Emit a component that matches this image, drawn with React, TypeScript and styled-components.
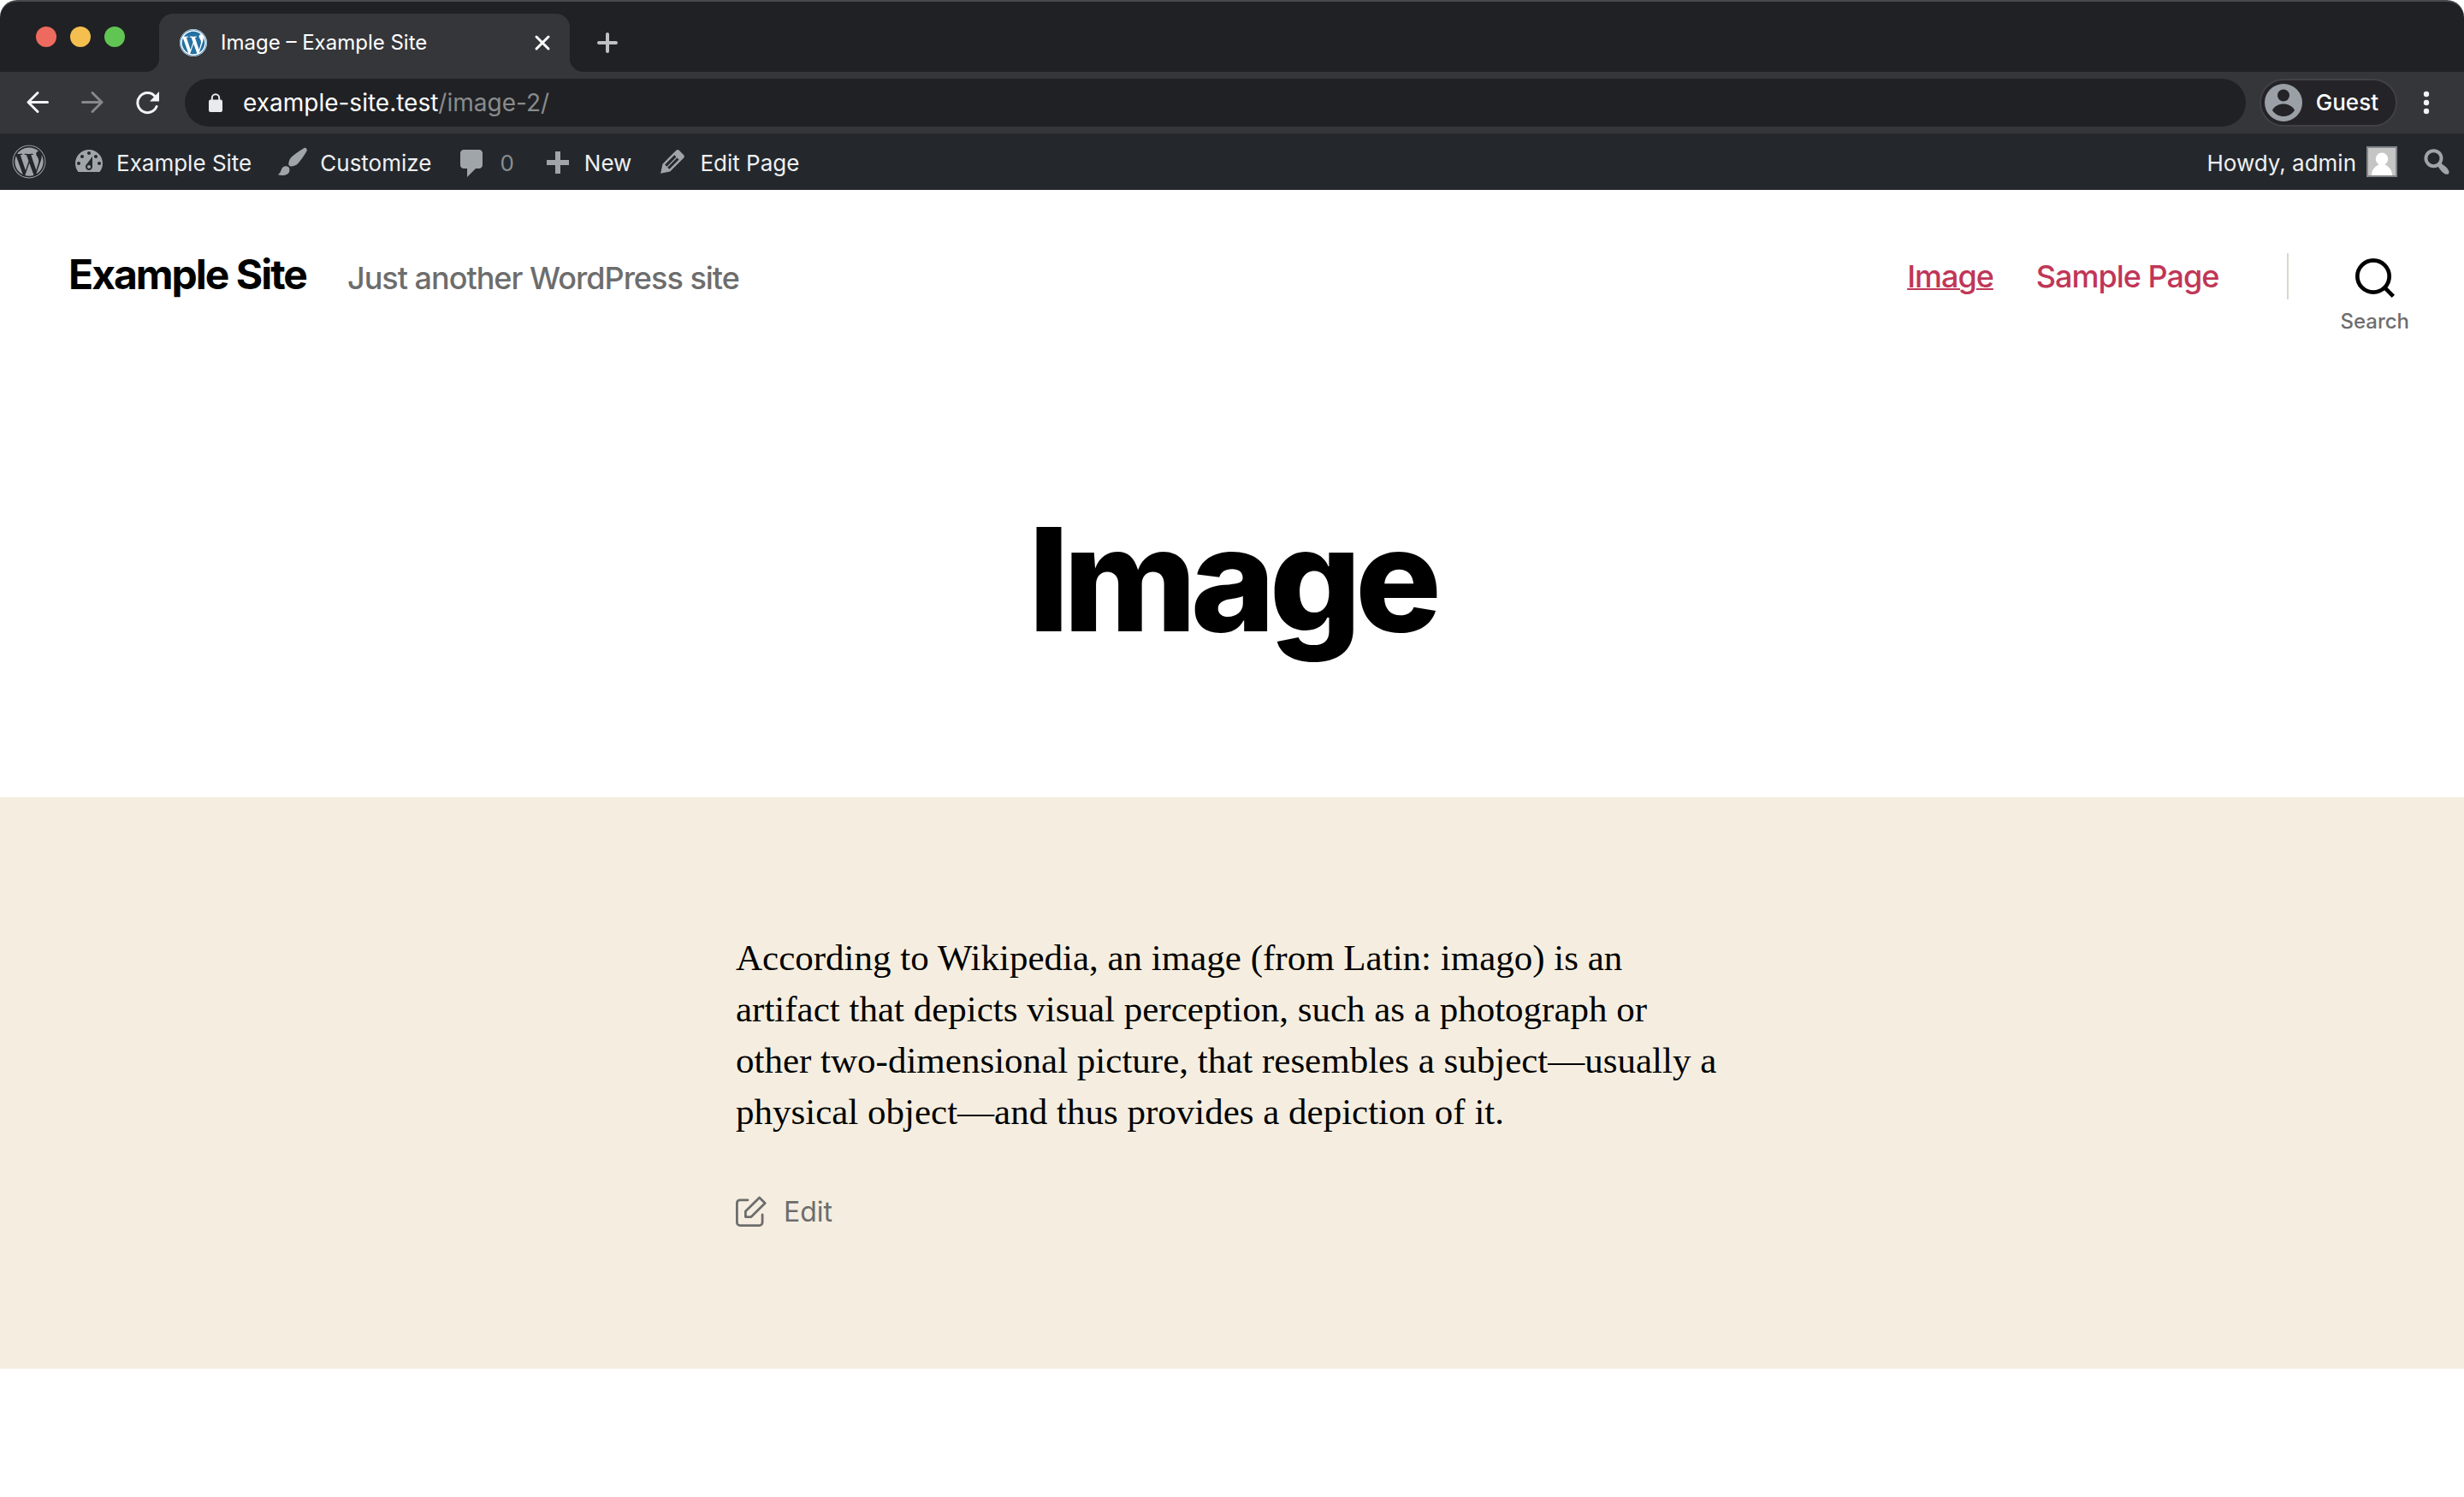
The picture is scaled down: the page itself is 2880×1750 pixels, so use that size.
import React from "react";
import styled, { createGlobalStyle } from "styled-components";
import { FaWordpress } from "react-icons/fa";

const GlobalStyle = createGlobalStyle`
  * { box-sizing: border-box; }
  body {
    margin: 0;
    background: #fff;
    font-family: Inter, "Liberation Sans", sans-serif;
    -webkit-font-smoothing: antialiased;
  }
  button {
    padding: 0;
    border: 0;
    background: none;
    color: inherit;
    font: inherit;
    cursor: pointer;
  }
  a { color: inherit; text-decoration: none; }
  svg { display: block; flex: none; }
`;

const Page = styled.div`
  min-height: 100vh;
  display: flex;
  flex-direction: column;
`;

/* ---------- browser window ---------- */

const TabStrip = styled.div`
  display: flex;
  height: 84px;
  padding: 14px 0 0 42px;
  border-top: 2px solid #48494c;
  border-radius: 20px 20px 0 0;
  background: #202124;
`;

const TrafficLights = styled.div`
  display: flex;
  gap: 16px;
  margin: 15px 40px 0 0;
`;

const Light = styled.button<{ $color: string }>`
  width: 24px;
  height: 24px;
  border-radius: 50%;
  background: ${(p) => p.$color};
`;

const Tab = styled.div`
  position: relative;
  display: flex;
  align-items: center;
  width: 480px;
  height: 68px;
  padding: 0 22px 0 24px;
  border-radius: 16px 16px 0 0;
  background: #35363a;
  color: #fff;

  &::before,
  &::after {
    content: "";
    position: absolute;
    bottom: 0;
    width: 16px;
    height: 16px;
  }
  &::before {
    right: 100%;
    background: radial-gradient(circle at 0 0, transparent 16px, #35363a 16px);
  }
  &::after {
    left: 100%;
    background: radial-gradient(circle at 100% 0, transparent 16px, #35363a 16px);
  }
`;

const Favicon = styled.span`
  display: block;
  margin-right: 16px;
  border-radius: 50%;
  background: #fff;
  color: #2471a3;
`;

const TabTitle = styled.span`
  flex: 1;
  font-size: 24px;
  line-height: 32px;
`;

const NewTab = styled.button`
  align-self: flex-start;
  margin: 22px 0 0 32px;
`;

const Toolbar = styled.div`
  display: flex;
  align-items: center;
  height: 72px;
  padding: 0 40px 0 30px;
  background: #35363a;
  color: #f1f3f4;
`;

const NavButtons = styled.div`
  display: flex;
  gap: 36px;
  margin-right: 30px;
`;

const Omnibox = styled.label`
  flex: 1;
  display: flex;
  align-items: center;
  height: 56px;
  padding: 0 28px;
  border-radius: 28px;
  background: #202124;
  color: #8a8b8d;
  font-size: 28px;
  line-height: 36px;
`;

const HostInput = styled.input`
  field-sizing: content;
  margin-left: 24px;
  padding: 0;
  border: 0;
  outline: 0;
  background: none;
  color: #fff;
  font: inherit;
`;

const Profile = styled.button`
  display: flex;
  align-items: center;
  gap: 16px;
  height: 56px;
  margin: 0 30px 0 16px;
  padding: 0 20px 0 4px;
  border: 2px solid #414146;
  border-radius: 28px;
  background: #242328;
  color: #fff;
  font-size: 26px;
  line-height: 32px;
  font-weight: 500;
`;

/* ---------- admin bar ---------- */

const AdminBar = styled.nav`
  display: flex;
  align-items: center;
  justify-content: space-between;
  height: 66px;
  padding: 0 12px 0 14px;
  background: #24282d;
  color: #f0f0f1;
  font-size: 26px;
  line-height: 32px;
`;

const AdminGroup = styled.div`
  display: flex;
  align-items: center;
`;

const AdminLink = styled.a<{ $before: number; $dim?: boolean }>`
  display: flex;
  align-items: center;
  gap: 12px;
  margin-left: ${(p) => p.$before}px;
  color: ${(p) => (p.$dim ? "#8a8d90" : "inherit")};

  svg { color: #a0a5aa; }
`;

const AdminLabel = styled.span`
  padding-top: 4px;
`;

/* ---------- site ---------- */

const SiteHeader = styled.header`
  display: flex;
  justify-content: space-between;
  align-items: flex-start;
  padding: 68px 64px 61px 80px;
`;

const Branding = styled.div`
  display: flex;
  align-items: baseline;
  gap: 48px;
  line-height: 62px;
`;

const SiteTitle = styled.a`
  color: #000;
  font-size: 48px;
  font-weight: 700;
  letter-spacing: -2px;
`;

const Tagline = styled.span`
  color: #6d6d6d;
  font-size: 36px;
  font-weight: 450;
  letter-spacing: -1px;
`;

const HeaderNav = styled.div`
  display: flex;
  align-items: flex-start;
`;

const Menu = styled.nav`
  display: flex;
  gap: 50px;
  margin-top: 6px;
  padding-right: 80px;
  border-right: 2px solid #dcd7ca;
  color: #c03657;
  font-size: 36px;
  line-height: 54px;
  font-weight: 450;
  letter-spacing: -1px;
`;

const MenuLink = styled.a<{ $current?: boolean }>`
  text-decoration: ${(p) => (p.$current ? "underline" : "none")};
  text-decoration-thickness: 2px;
`;

const SearchButton = styled.button`
  display: flex;
  flex-direction: column;
  align-items: center;
  gap: 16px;
  margin-left: 60px;
  padding-top: 12px;
  color: #6d6d6d;
  font-size: 24px;
  line-height: 24px;
  font-weight: 500;

  svg { color: #000; }
`;

const EntryHeader = styled.header`
  padding: 136px 80px 163px;
  text-align: center;
`;

const EntryTitle = styled.h1`
  margin: 0;
  font-size: 168px;
  line-height: 184px;
  font-weight: 800;
  letter-spacing: -7px;
`;

const EntryBody = styled.section`
  padding: 158px 80px 166px;
  background: #f5eee0;
`;

const Column = styled.div`
  max-width: 1160px;
  margin: 0 auto;
`;

const Paragraph = styled.p`
  margin: 0 0 68px;
  font-family: "Liberation Serif", serif;
  font-size: 43px;
  line-height: 60px;
`;

const EditLink = styled.a`
  display: inline-flex;
  align-items: center;
  gap: 20px;
  color: #6d6d6d;
  font-size: 32px;
  line-height: 34px;
  vertical-align: top;
`;

const EditLabel = styled.span`
  padding-top: 2px;
`;

/* ---------- icons ---------- */

const ICONS = {
  dashboard:
    "M3.76 16h12.48c1.1-1.37 1.76-3.11 1.76-5 0-4.42-3.58-8-8-8s-8 3.58-8 8c0 1.89.66 3.63 1.76 5zM10 4c.55 0 1 .45 1 1s-.45 1-1 1-1-.45-1-1 .45-1 1-1zM6 6c.55 0 1 .45 1 1s-.45 1-1 1-1-.45-1-1 .45-1 1-1zm8 0c.55 0 1 .45 1 1s-.45 1-1 1-1-.45-1-1 .45-1 1-1zm-5.37 5.55L12 7v6c0 1.1-.9 2-2 2s-2-.9-2-2c0-.57.24-1.08.63-1.45zM4 10c.55 0 1 .45 1 1s-.45 1-1 1-1-.45-1-1 .45-1 1-1zm12 0c.55 0 1 .45 1 1s-.45 1-1 1-1-.45-1-1 .45-1 1-1zm-5 3c0-.55-.45-1-1-1s-1 .45-1 1 .45 1 1 1 1-.45 1-1z",
  brush:
    "M18.33 3.57s.27-.8-.31-1.36c-.53-.52-1.22-.24-1.22-.24-.61.3-5.76 3.47-7.67 5.57-.86.96-2.06 3.79-1.09 4.82.92.98 3.96-.17 4.79-1 2.06-2.06 5.21-7.17 5.5-7.79zM1.4 17.65c2.37-1.56 1.46-3.41 3.23-4.64.93-.65 2.22-.62 3.08.29.63.67.8 2.57-.16 3.46-1.57 1.45-4 1.55-6.15.89z",
  comment:
    "M5 3h9c1.1 0 2 .9 2 2v7c0 1.1-.9 2-2 2h-2l-5 5v-5H5c-1.1 0-2-.9-2-2V5c0-1.1.9-2 2-2z",
  plus: "M17 9v3h-5v5H9v-5H4V9h5V4h3v5h5z",
  pencil:
    "M13.89 3.39l2.71 2.72c.46.46.42 1.24.03 1.64l-8.01 8.02-5.56 1.16 1.16-5.58s7.6-7.63 7.99-8.03c.39-.39 1.22-.39 1.68.07zm-2.73 2.79l-5.59 5.61 1.11 1.11 5.54-5.65zm-2.97 8.23l5.58-5.6-1.07-1.08-5.59 5.6z",
  search:
    "M12.14 4.18c1.87 1.87 2.11 4.75.72 6.89.12.1.22.21.36.31.2.16.47.36.81.59.34.24.56.39.66.47.42.31.73.57.94.78.32.32.6.65.84 1 .25.35.44.69.59 1.04.14.35.21.68.18 1-.02.32-.14.59-.36.81s-.49.34-.81.36c-.31.02-.65-.04-.99-.19-.35-.14-.7-.34-1.04-.59-.35-.24-.68-.52-1-.84-.21-.21-.47-.52-.77-.93-.1-.13-.25-.35-.47-.66-.22-.32-.4-.57-.56-.78-.16-.2-.29-.35-.44-.5-2.07 1.09-4.69.76-6.44-.98-2.14-2.15-2.14-5.64 0-7.78 2.15-2.15 5.63-2.15 7.78 0zm-1.41 6.36c1.36-1.37 1.36-3.58 0-4.95-1.37-1.37-3.59-1.37-4.95 0-1.37 1.37-1.37 3.58 0 4.95 1.36 1.37 3.58 1.37 4.95 0z",
};

const Dashicon = ({ name }: { name: keyof typeof ICONS }) => (
  <svg width="40" height="40" viewBox="0 0 20 20" fill="currentColor" fillRule="evenodd" aria-hidden="true">
    <path d={ICONS[name]} />
  </svg>
);

const BackArrow = () => (
  <svg width="28" height="28" viewBox="0 0 28 28" fill="none" stroke="#f1f3f4" strokeWidth="3" strokeLinecap="round" strokeLinejoin="round">
    <path d="M25.500 13.500H3M14 2.500l-11 11 11 11" />
  </svg>
);

const ForwardArrow = () => (
  <svg width="28" height="28" viewBox="0 0 28 28" fill="none" stroke="#87888a" strokeWidth="3" strokeLinecap="round" strokeLinejoin="round">
    <path d="M2.500 13.500H25M14 2.500l11 11-11 11" />
  </svg>
);

const ReloadIcon = () => (
  <svg width="28" height="28" viewBox="0 0 28 28">
    <path d="M25 18.500A11.500 11.500 0 1 1 23 6.500" fill="none" stroke="#f1f3f4" strokeWidth="3" strokeLinecap="round" />
    <path d="M28 1v11.500H17z" fill="#f1f3f4" />
  </svg>
);

const LockIcon = () => (
  <svg width="16" height="24" viewBox="0 0 16 24">
    <path d="M3.800 10V6.500a4.200 4.200 0 0 1 8.400 0V10" fill="none" stroke="#e8eaed" strokeWidth="2" />
    <rect y="8.500" width="16" height="14.500" rx="2" fill="#e8eaed" />
  </svg>
);

const CloseIcon = () => (
  <svg width="20" height="20" viewBox="0 0 20 20" stroke="#fff" strokeWidth="3" strokeLinecap="round">
    <path d="M3 3l14 14M17 3L3 17" />
  </svg>
);

const AddIcon = () => (
  <svg width="24" height="24" viewBox="0 0 24 24" stroke="#bdc1c6" strokeWidth="4" strokeLinecap="round">
    <path d="M12 2v20M2 12h20" />
  </svg>
);

const GuestIcon = () => (
  <svg width="44" height="44" viewBox="0 0 44 44">
    <circle cx="22" cy="22" r="22" fill="#9aa0a6" />
    <circle cx="22" cy="13.500" r="7" fill="#242328" />
    <path d="M9 31c2-5 8-7.500 13-7.500S33 26 35 31c-3 4.500-8 7-13 7s-10-2.500-13-7z" fill="#242328" />
  </svg>
);

const MenuDots = () => (
  <svg width="8" height="28" viewBox="0 0 8 28" fill="#f1f3f4">
    <circle cx="4" cy="4" r="3.200" />
    <circle cx="4" cy="14" r="3.200" />
    <circle cx="4" cy="24" r="3.200" />
  </svg>
);

const Avatar = () => (
  <svg width="36" height="36" viewBox="0 0 36 36">
    <rect width="36" height="36" fill="#82878c" />
    <rect x="2" y="2" width="32" height="32" fill="#c5c5c5" />
    <path d="M6 34c0-6 3-10 8.500-12.500C12 19.500 10.800 17 10.800 14.800a7.200 7.200 0 0 1 14.400 0c0 2.200-1.200 4.700-3.700 6.700C27 24 30 28 30 34z" fill="#fff" />
  </svg>
);

const MagnifierIcon = () => (
  <svg width="46" height="46" viewBox="0 0 23 23" fill="none" stroke="currentColor" strokeWidth="2.334">
    <circle cx="10.504" cy="10.504" r="9.337" />
    <path d="M16.600 16.600l5.575 5.575" />
  </svg>
);

const EditIcon = () => (
  <svg width="36" height="36" viewBox="0 0 36 36" fill="none" stroke="currentColor" strokeWidth="2.800" strokeLinecap="round" strokeLinejoin="round">
    <path d="M14 4.800H5a3.600 3.600 0 0 0-3.600 3.600V31A3.600 3.600 0 0 0 5 34.600h22.500a3.600 3.600 0 0 0 3.600-3.600v-9" />
    <path d="M27.700 1.900l6.500 6.500L18 24.600h-6.600V18z" />
  </svg>
);

export default function App() {
  return (
    <Page>
      <GlobalStyle />

      <TabStrip>
        <TrafficLights>
          <Light $color="#ed6a5e" aria-label="Close window" />
          <Light $color="#f5bf4f" aria-label="Minimize window" />
          <Light $color="#61c554" aria-label="Zoom window" />
        </TrafficLights>
        <Tab>
          <Favicon><FaWordpress size={32} /></Favicon>
          <TabTitle>Image – Example Site</TabTitle>
          <button aria-label="Close tab"><CloseIcon /></button>
        </Tab>
        <NewTab aria-label="New tab"><AddIcon /></NewTab>
      </TabStrip>

      <Toolbar>
        <NavButtons>
          <button aria-label="Back"><BackArrow /></button>
          <button aria-label="Forward"><ForwardArrow /></button>
          <button aria-label="Reload"><ReloadIcon /></button>
        </NavButtons>
        <Omnibox>
          <LockIcon />
          <HostInput aria-label="Address" defaultValue="example-site.test" />
          <span>/image-2/</span>
        </Omnibox>
        <Profile><GuestIcon />Guest</Profile>
        <button aria-label="Browser menu"><MenuDots /></button>
      </Toolbar>

      <AdminBar aria-label="Admin">
        <AdminGroup>
          <AdminLink href="#about" $before={0} aria-label="About WordPress"><FaWordpress size={40} /></AdminLink>
          <AdminLink href="#dashboard" $before={30}><Dashicon name="dashboard" /><AdminLabel>Example Site</AdminLabel></AdminLink>
          <AdminLink href="#customize" $before={28}><Dashicon name="brush" /><AdminLabel>Customize</AdminLabel></AdminLink>
          <AdminLink href="#comments" $before={28} $dim><Dashicon name="comment" /><AdminLabel>0</AdminLabel></AdminLink>
          <AdminLink href="#new" $before={30}><Dashicon name="plus" /><AdminLabel>New</AdminLabel></AdminLink>
          <AdminLink href="#edit" $before={28}><Dashicon name="pencil" /><AdminLabel>Edit Page</AdminLabel></AdminLink>
        </AdminGroup>
        <AdminGroup>
          <AdminLink href="#profile" $before={0}><AdminLabel>Howdy, admin</AdminLabel><Avatar /></AdminLink>
          <AdminLink href="#search" $before={26} aria-label="Search site"><Dashicon name="search" /></AdminLink>
        </AdminGroup>
      </AdminBar>

      <SiteHeader>
        <Branding>
          <SiteTitle href="#home">Example Site</SiteTitle>
          <Tagline>Just another WordPress site</Tagline>
        </Branding>
        <HeaderNav>
          <Menu>
            <MenuLink href="#image" $current>Image</MenuLink>
            <MenuLink href="#sample">Sample Page</MenuLink>
          </Menu>
          <SearchButton><MagnifierIcon />Search</SearchButton>
        </HeaderNav>
      </SiteHeader>

      <main>
        <EntryHeader>
          <EntryTitle>Image</EntryTitle>
        </EntryHeader>
        <EntryBody>
          <Column>
            <Paragraph>
              According to Wikipedia, an image (from Latin: imago) is an artifact that depicts
              visual perception, such as a photograph or other two-dimensional picture, that
              resembles a subject—usually a physical object—and thus provides a depiction of it.
            </Paragraph>
            <EditLink href="#edit-post"><EditIcon /><EditLabel>Edit</EditLabel></EditLink>
          </Column>
        </EntryBody>
      </main>
    </Page>
  );
}
